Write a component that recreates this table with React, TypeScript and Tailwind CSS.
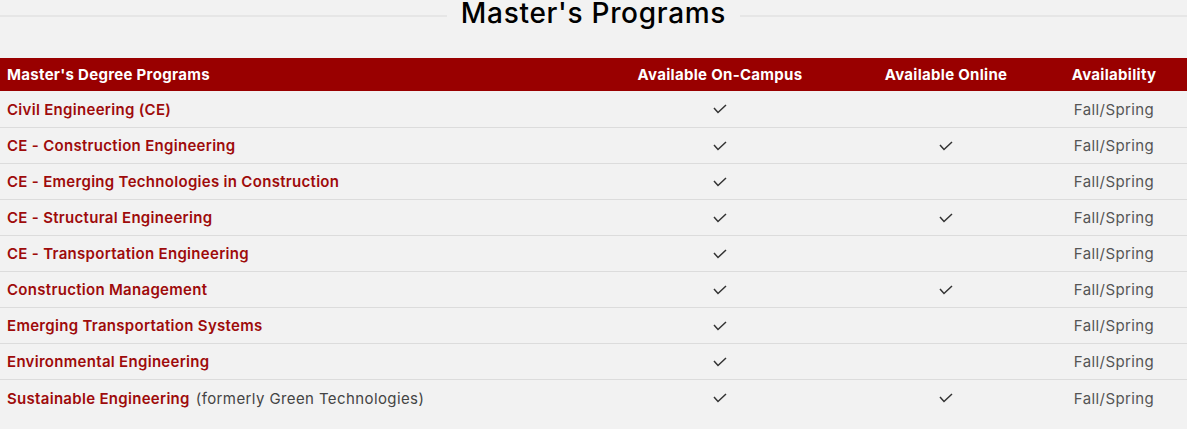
import React from "react";

type Program = {
    name: string;
    note?: string;
    campus: boolean;
    online: boolean;
    availability: string;
};

const programs: Program[] = [
    { name: "Civil Engineering (CE)", campus: true, online: false, availability: "Fall/Spring" },
    { name: "CE - Construction Engineering", campus: true, online: true, availability: "Fall/Spring" },
    { name: "CE - Emerging Technologies in Construction", campus: true, online: false, availability: "Fall/Spring" },
    { name: "CE - Structural Engineering", campus: true, online: true, availability: "Fall/Spring" },
    { name: "CE - Transportation Engineering", campus: true, online: false, availability: "Fall/Spring" },
    { name: "Construction Management", campus: true, online: true, availability: "Fall/Spring" },
    { name: "Emerging Transportation Systems", campus: true, online: false, availability: "Fall/Spring" },
    { name: "Environmental Engineering", campus: true, online: false, availability: "Fall/Spring" },
    { name: "Sustainable Engineering", note: "(formerly Green Technologies)", campus: true, online: true, availability: "Fall/Spring" },
];

function Check() {
    return (
        <svg width="14" height="10" viewBox="0 0 14 10" className="inline-block">
            <polyline points="1,4 5,8.5 13,1" fill="none" stroke="#333" strokeWidth="1.5" />
        </svg>
    );
}

export default function App() {
    return (
        <div className="w-[1187px] h-[429px] overflow-hidden bg-[#f2f2f2] font-['Inter',sans-serif]">

            {/* ▼ 見出し ▼ */}
            <div className="flex items-start gap-[14px] h-[30px]">
                <div className="flex-1 h-[2px] mt-[15px] bg-[#e6e6e6]" />
                <h2 className="text-[28px] tracking-[0.7px] font-medium text-black leading-none -mt-[1px]">Master's Programs</h2>
                <div className="flex-1 h-[2px] mt-[15px] bg-[#e6e6e6]" />
            </div>

            {/* ▼ テーブル ▼ */}
            <table className="w-full mt-[28px] border-collapse text-[15px]">
                <thead>
                    <tr className="bg-[#990000] text-white h-[33px]">
                        <th className="pl-[7px] pt-[2px] text-left font-bold tracking-[0.3px] w-[589px]">Master's Degree Programs</th>
                        <th className="pt-[2px] text-center font-bold tracking-[0.3px] w-[262px]">Available On-Campus</th>
                        <th className="pt-[2px] text-center font-bold tracking-[0.3px] w-[190px]">Available Online</th>
                        <th className="pt-[2px] text-center font-bold tracking-[0.3px] w-[146px]">Availability</th>
                    </tr>
                </thead>
                <tbody>
                    {programs.map((p, i) => (
                        <tr key={p.name} className={i < programs.length - 1 ? "h-[36px] border-b border-[#dcdcdc]" : "h-[36px]"}>
                            <td className="pl-[7px] pt-[3px]">
                                <span className="font-semibold tracking-[0.3px] text-[#9e0b0b]">{p.name}</span>
                                {p.note && <span className="text-[#444] tracking-[0.4px] ml-[6px]">{p.note}</span>}
                            </td>
                            <td className="text-center">{p.campus && <Check />}</td>
                            <td className="text-center">{p.online && <Check />}</td>
                            <td className="text-center text-[#555] tracking-[0.4px] pt-[3px]">{p.availability}</td>
                        </tr>
                    ))}
                </tbody>
            </table>
        </div>
    );
}
